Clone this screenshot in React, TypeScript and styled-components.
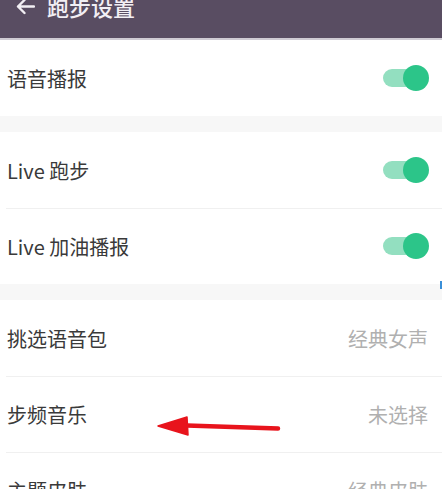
import React from "react";
import styled, { createGlobalStyle } from "styled-components";

const GlobalStyle = createGlobalStyle`
  html, body {
    margin: 0;
    padding: 0;
    background: #f7f7f7;
  }
  body {
    font-family: "Noto Sans CJK SC", "Noto Sans", sans-serif;
    overflow: hidden;
  }
`;

const Page = styled.div`
  position: relative;
  width: 442px;
  height: 489px;
  overflow: hidden;
  background: #f7f7f7;
  display: flex;
  flex-direction: column;
`;

const Header = styled.header`
  height: 38px;
  background: #594d62;
  border-bottom: 2px solid #cfcbd3;
  display: flex;
  align-items: flex-start;
  padding-left: 15px;
  gap: 12px;
  flex-shrink: 0;
`;

const BackIcon = styled.svg`
  width: 20px;
  height: 16px;
  margin-top: -1px;
`;

const Title = styled.h1`
  margin: -5px 0 0;
  font-size: 22px;
  line-height: 22px;
  font-weight: 500;
  color: #f2eff4;
`;

const Section = styled.section`
  background: #ffffff;
  display: flex;
  flex-direction: column;
  margin-bottom: 16px;
  flex-shrink: 0;
`;

const Row = styled.div<{ $divider?: boolean }>`
  position: relative;
  height: 76px;
  display: flex;
  align-items: center;
  justify-content: space-between;
  padding: 0 14px 0 7px;
  box-sizing: border-box;
  &::before {
    content: "";
    display: ${(p) => (p.$divider ? "block" : "none")};
    position: absolute;
    top: 0;
    left: 6px;
    right: 0;
    height: 1px;
    background: #f0f0f0;
  }
`;

const Label = styled.span`
  font-size: 20px;
  color: #3a3a3a;
`;

const Value = styled.span`
  font-size: 20px;
  color: #b0b0b0;
`;

const Switch = styled.div`
  position: relative;
  width: 46px;
  height: 26px;
  margin-right: -0.5px;
`;

const Track = styled.div`
  position: absolute;
  left: 0;
  top: 4px;
  width: 38px;
  height: 18px;
  border-radius: 9px;
  background: #93dfc0;
`;

const Knob = styled.div`
  position: absolute;
  right: 0;
  top: 0;
  width: 26px;
  height: 26px;
  border-radius: 50%;
  background: #2cc589;
`;

const Pointer = styled.svg`
  position: absolute;
  left: 155px;
  top: 414px;
  width: 128px;
  height: 26px;
`;

const EdgeMark = styled.div`
  position: absolute;
  right: 0;
  top: 281px;
  width: 2px;
  height: 8px;
  background: #3a8fd8;
`;

const Toggle = () => (
  <Switch>
    <Track />
    <Knob />
  </Switch>
);

export default function App() {
  return (
    <Page>
      <GlobalStyle />
      <Header>
        <BackIcon viewBox="0 0 20 16">
          <path
            d="M19 7.5H3M9.5 1L3 7.5L9.5 14"
            fill="none"
            stroke="#f2eff4"
            strokeWidth="2.4"
            strokeLinecap="round"
            strokeLinejoin="round"
          />
        </BackIcon>
        <Title>跑步设置</Title>
      </Header>

      <Section>
        <Row>
          <Label>语音播报</Label>
          <Toggle />
        </Row>
      </Section>

      <Section>
        <Row>
          <Label>Live 跑步</Label>
          <Toggle />
        </Row>
        <Row $divider>
          <Label>Live 加油播报</Label>
          <Toggle />
        </Row>
      </Section>

      <Section>
        <Row>
          <Label>挑选语音包</Label>
          <Value>经典女声</Value>
        </Row>
        <Row $divider>
          <Label>步频音乐</Label>
          <Value>未选择</Value>
        </Row>
        <Row $divider>
          <Label>主题皮肤</Label>
          <Value>经典皮肤</Value>
        </Row>
      </Section>

      <Pointer viewBox="0 0 128 26">
        <path d="M32 11.5 L123 14.5" stroke="#e8141c" strokeWidth="4.5" strokeLinecap="round" />
        <path d="M3 12 L32 3 L33 21 Z" fill="#e8141c" stroke="#e8141c" strokeWidth="1.5" strokeLinejoin="round" />
      </Pointer>
      <EdgeMark />
    </Page>
  );
}
